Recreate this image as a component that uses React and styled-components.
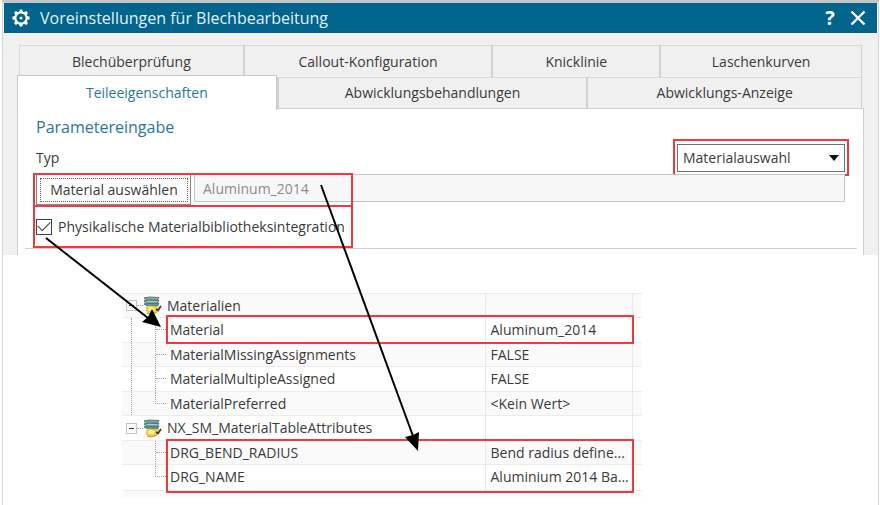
import React from "react";
import styled, { createGlobalStyle } from "styled-components";

const GlobalStyle = createGlobalStyle`
  * {
    box-sizing: border-box;
  }

  body {
    margin: 0;
    background-color: #ffffff;
    font-family: "Open Sans", "Noto Sans", sans-serif;
    font-size: 14px;
    line-height: 18px;
    color: #3b3b3b;
  }

  button,
  input,
  select {
    font: inherit;
    color: inherit;
  }
`;

const Page = styled.main`
  position: relative;
  min-height: 100vh;
  margin: 0 1px 0 2px;
  border: 1px solid #d4d4d4;
  border-top: 3px solid #c4c6c8;
  border-bottom: 0;
  overflow: hidden;
`;

const Dialog = styled.section`
  padding: 0 1px;
  background-color: #f0f0f0;
`;

const TitleBar = styled.header`
  display: flex;
  align-items: center;
  height: 30px;
  padding: 0 5px 0 8px;
  background-color: #00648c;
  color: #ffffff;
`;

const Title = styled.h1`
  flex: 1;
  margin: 0 0 0 10px;
  font-weight: 400;
  font-size: 16px;
  line-height: 20px;
  color: #e4f1f6;
`;

const TitleButton = styled.button`
  display: flex;
  justify-content: center;
  align-items: center;
  width: 28px;
  height: 28px;
  border: 0;
  padding: 0;
  background-color: transparent;
  font-weight: 700;
  font-size: 20px;
  color: #ffffff;
`;

const Tabs = styled.nav`
  padding: 12px 15px 0 15px;
`;

const TabRow = styled.div`
  display: grid;
  grid-template-columns: ${({ $columns }) => $columns};
  height: ${({ $height }) => $height};
  border-right: 1px solid #d2d2d2;
`;

const Tab = styled.button`
  border: 1px solid #d8d8d8;
  border-width: 1px 0 0 1px;
  padding: 0;
  background-color: #f0f0f0;

  & + & {
    border-left: 2px solid #d2d2d2;
  }
`;

const ActiveTab = styled(Tab)`
  position: relative;
  margin: -2px 0 -2px -2px;
  border-color: #c8c8c8;
  border-right-width: 1px;
  padding-bottom: 1px;
  background-color: #ffffff;
  color: #2a7896;
`;

const Panel = styled.div`
  margin: 0 13px;
  border: 1px solid #cfcfcf;
  border-bottom: 0;
  padding: 8px 6px 6px 7px;
  background-color: #ffffff;
`;

const PanelBody = styled.div`
  padding: 0 12px 0 11px;
`;

const Heading = styled.h2`
  margin: 0;
  font-weight: 400;
  font-size: 16px;
  line-height: 20px;
  color: #2a7896;
`;

const TypeRow = styled.div`
  display: flex;
  justify-content: space-between;
  align-items: center;
  height: 37px;
  padding-top: 4px;
`;

const Marked = styled.div`
  position: relative;
`;

const Frame = styled.span`
  position: absolute;
  inset: ${({ $inset }) => $inset};
  width: ${({ $width }) => $width};
  border: 2px solid #ee3a3c;
  pointer-events: none;
`;

const SelectBox = styled.div`
  display: flex;
  align-items: center;
  position: relative;

  svg {
    position: absolute;
    right: 6px;
    pointer-events: none;
  }
`;

const Select = styled.select`
  appearance: none;
  width: 168px;
  height: 28px;
  border: 1px solid #707070;
  border-radius: 0;
  padding: 0 5px;
  background-color: #ffffff;
`;

const PickRow = styled(Marked)`
  display: flex;
  align-items: flex-start;
  gap: 3px;
  height: 32px;
`;

const PickButton = styled.button`
  width: 155px;
  height: 31px;
  border: 1px solid #8c8c8c;
  padding: 3px 2px 2px 3px;
  background-color: #ffffff;

  span {
    display: block;
    border: 1px dotted #606060;
    line-height: 22px;
  }
`;

const PickValue = styled.input`
  flex: 1;
  min-width: 0;
  height: 28px;
  border: 1px solid #c6c6c6;
  padding: 0 8px;
  background-color: #f7f7f7;

  &:disabled {
    color: #8c8c8c;
  }
`;

const CheckRow = styled(Marked)`
  display: flex;
  align-items: center;
  gap: 6px;
  height: 41px;
`;

const Checkbox = styled.input`
  appearance: none;
  display: grid;
  place-items: center;
  width: 16px;
  height: 16px;
  margin: 0;
  border: 1px solid #404040;
  background-color: #ffffff;

  &:checked::before {
    content: "";
    width: 11px;
    height: 6px;
    margin-bottom: 4px;
    border: solid #404040;
    border-width: 0 0 1px 1px;
    rotate: -45deg;
  }
`;

const Divider = styled.hr`
  margin: 1px 0 0;
  border: 0;
  border-top: 1px solid #cfcfcf;
`;

const Attributes = styled(Marked)`
  width: 520px;
  margin: 38px 0 8px 119px;
`;

const Table = styled.table`
  width: 100%;
  table-layout: fixed;
  border-collapse: collapse;
`;

const TableEnd = styled.div`
  height: 8px;
  border-top: 1px solid #ececec;
  background-color: #fafafa;
`;

const Row = styled.tr`
  height: 24px;
  background-color: #fafafa;

  &:nth-child(even) {
    height: 25px;
    background-color: #ffffff;
  }
`;

const Cell = styled.td`
  height: inherit;
  padding: ${({ $tree }) => ($tree ? "0" : "0 5px")};
  border-top: 1px solid #ececec;
  border-right: 1px solid #e8e8e8;
  white-space: nowrap;

  &:last-child {
    border-right: 0;
  }
`;

const TreeItem = styled.div`
  display: flex;
  align-items: center;
  height: 100%;
  padding-left: 4px;
`;

const Trunk = styled.span`
  align-self: stretch;
  width: 24px;
  margin-left: 5px;
  border-left: 1px ${({ $open }) => ($open ? "dotted #a0a0a0" : "solid transparent")};
`;

const Branch = styled.span`
  display: grid;
  grid-template-rows: 1fr 1fr;
  align-self: stretch;
  width: 11px;
  margin-right: 4px;
  border-left: ${({ $last }) => ($last ? "0" : "1px dotted #a0a0a0")};

  &::before {
    content: "";
    border-bottom: 1px dotted #a0a0a0;
    border-left: ${({ $last }) => ($last ? "1px dotted #a0a0a0" : "0")};
  }
`;

const Toggle = styled.button`
  display: grid;
  place-items: center;
  width: 11px;
  height: 11px;
  border: 1px solid #c4c4c4;
  padding: 0;
  background-color: #ffffff;

  &::before {
    content: "";
    width: 5px;
    border-top: 1px solid #303030;
  }
`;

const Link = styled.span`
  width: 6px;
  border-top: 1px dotted #a0a0a0;
`;

const GroupName = styled.span`
  margin-left: 5px;
`;

const Arrows = styled.svg`
  position: absolute;
  top: -3px;
  left: -3px;
  pointer-events: none;
`;

const rows = [
  { name: "Materialien", group: true },
  { name: "Material", value: "Aluminum_2014", open: true },
  { name: "MaterialMissingAssignments", value: "FALSE", open: true },
  { name: "MaterialMultipleAssigned", value: "FALSE", open: true },
  { name: "MaterialPreferred", value: "<Kein Wert>", open: true, last: true },
  { name: "NX_SM_MaterialTableAttributes", group: true },
  { name: "DRG_BEND_RADIUS", value: "Bend radius define..." },
  { name: "DRG_NAME", value: "Aluminium 2014 Ba...", last: true },
];

const GearIcon = () => (
  <svg width="18" height="18" viewBox="-9 -9 18 18" fill="none" stroke="#fff">
    {[0, 45, 90, 135, 180, 225, 270, 315].map((angle) => (
      <path
        key={angle}
        d="M-2.2 -5.5 L-1.2 -8.6 H1.2 L2.2 -5.5Z"
        fill="#fff"
        stroke="none"
        transform={`rotate(${angle})`}
      />
    ))}
    <circle r="5.6" strokeWidth="2" />
    <circle r="1.5" fill="#fff" stroke="none" />
  </svg>
);

const CloseIcon = () => (
  <svg width="16" height="16" viewBox="0 0 16 16" stroke="#fff" strokeWidth="2.4">
    <path d="M1.5 1.5 14.5 14.5M14.5 1.5 1.5 14.5" />
  </svg>
);

const MaterialIcon = () => (
  <svg width="19" height="19" viewBox="0 0 19 19">
    <path d="M1 2.5V8.5L5 10H16V2Z" fill="#b9d3cf" />
    <path d="M1 8 6 7 16 7.500 14 10 5 10Z" fill="#5f9a94" stroke="#33605f" strokeWidth=".7" />
    <path d="M1 5 6 4 16 4.500 14 7 5 7Z" fill="#a5cbc4" stroke="#3d6b6a" strokeWidth=".8" />
    <path d="M1 2 6 1 16 1.500 14 4 5 4Z" fill="#7fa9a4" stroke="#3d6b6a" strokeWidth=".8" />
    <path d="M3 11 6 9.500 13 10.500 16 10 15 15 11 18 5 17.500 3 15Z" fill="#f2cb45" />
    <path d="M5 12 8 11 12 12.500 11 15 6 15Z" fill="#fdf09a" />
    <path d="M4 17 9 18 14 16" fill="none" stroke="#d08a3c" strokeWidth="1" />
    <path d="M13 13 15 14.500 18 10" fill="none" stroke="#4a3428" strokeWidth="1.700" />
  </svg>
);

const getRow = ({ name, value, group, open, last }) => (
  <Row key={name}>
    <Cell $tree>
      <TreeItem>
        {group ? (
          <>
            <Toggle type="button" aria-label={name} aria-expanded="true" />
            <Link />
            <MaterialIcon />
            <GroupName>{name}</GroupName>
          </>
        ) : (
          <>
            <Trunk $open={open} />
            <Branch $last={last} />
            <span>{name}</span>
          </>
        )}
      </TreeItem>
    </Cell>
    <Cell>{value}</Cell>
    <Cell />
  </Row>
);

const App = () => (
  <>
    <GlobalStyle />
    <Page>
      <Dialog>
        <TitleBar>
          <GearIcon />
          <Title>Voreinstellungen für Blechbearbeitung</Title>
          <TitleButton type="button">?</TitleButton>
          <TitleButton type="button" aria-label="Schließen">
            <CloseIcon />
          </TitleButton>
        </TitleBar>
        <Tabs>
          <TabRow $columns="224fr 249fr 168fr 202fr" $height="32px">
            <Tab type="button">Blechüberprüfung</Tab>
            <Tab type="button">Callout-Konfiguration</Tab>
            <Tab type="button">Knicklinie</Tab>
            <Tab type="button">Laschenkurven</Tab>
          </TabRow>
          <TabRow $columns="258fr 310fr 275fr" $height="31px">
            <ActiveTab type="button">Teileeigenschaften</ActiveTab>
            <Tab type="button">Abwicklungsbehandlungen</Tab>
            <Tab type="button">Abwicklungs-Anzeige</Tab>
          </TabRow>
        </Tabs>
        <Panel>
          <PanelBody>
            <Heading>Parametereingabe</Heading>
            <TypeRow>
              <label htmlFor="type">Typ</label>
              <SelectBox>
                <Select id="type">
                  <option>Materialauswahl</option>
                </Select>
                <svg width="10" height="6" viewBox="0 0 10 6">
                  <path d="M0 0H10L5 6Z" fill="#111" />
                </svg>
                <Frame $inset="-5px -4px -4px -4px" />
              </SelectBox>
            </TypeRow>
            <PickRow>
              <PickButton type="button">
                <span>Material auswählen</span>
              </PickButton>
              <PickValue aria-label="Material" defaultValue="Aluminum_2014" disabled />
              <Frame $inset="-1px auto -1px -3px" $width="320px" />
            </PickRow>
            <CheckRow>
              <Checkbox id="library" type="checkbox" defaultChecked />
              <label htmlFor="library">Physikalische Materialbibliotheksintegration</label>
              <Frame $inset="-1px auto -1px -3px" $width="320px" />
            </CheckRow>
          </PanelBody>
          <Divider />
        </Panel>
      </Dialog>
      <Attributes>
        <Table>
          <colgroup>
            <col />
            <col width="147" />
            <col width="10" />
          </colgroup>
          <tbody>{rows.map(getRow)}</tbody>
        </Table>
        <TableEnd />
        <Frame $inset="22px 8px 154px 44px" />
        <Frame $inset="146px 8px 5px 44px" />
      </Attributes>
      <Arrows width="440" height="460" viewBox="0 0 440 460">
        <g stroke="#000" strokeWidth="2">
          <path d="M46 238 148 318" />
          <path d="M321 185 413 436" />
        </g>
        <path d="M161 327 142 322 148 317 152 309Z" />
        <path d="M418 451 405 437 413 435 419 432Z" />
      </Arrows>
    </Page>
  </>
);

export default App;
